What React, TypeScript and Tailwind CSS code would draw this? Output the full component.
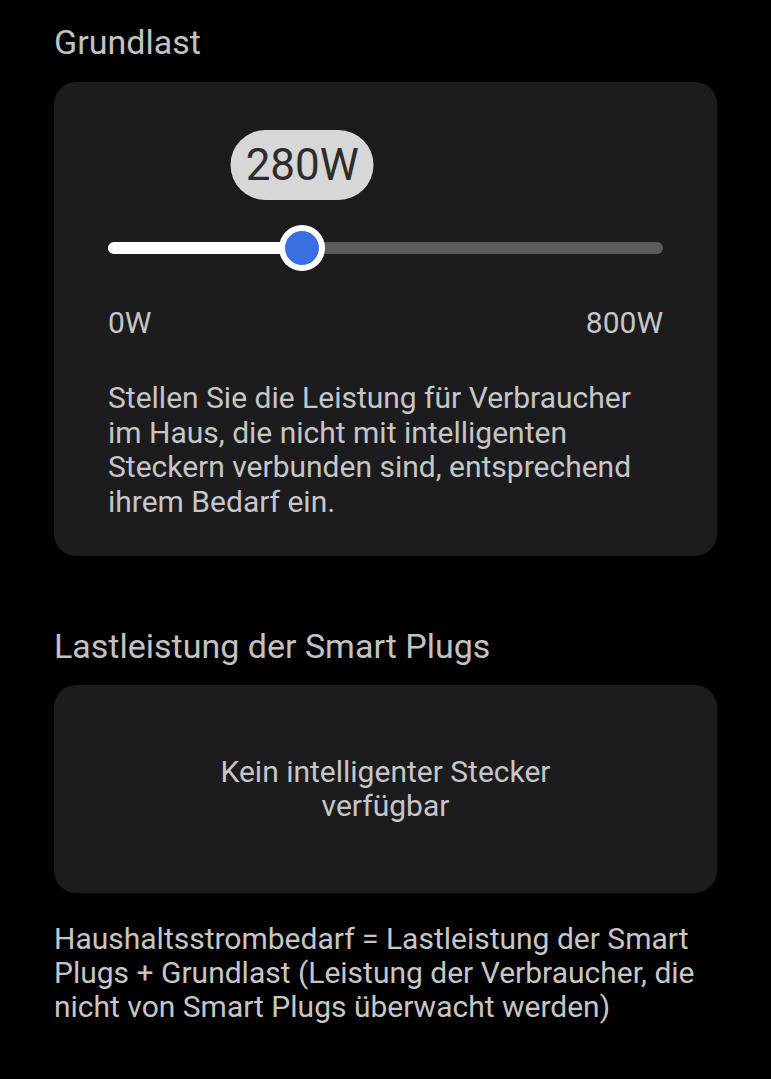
import React from "react";

const value = 280;
const max = 800;

function Slider() {
  const pct = (value / max) * 100;
  return (
    <div className="relative pt-[48px]">
      {/* value bubble over the thumb */}
      <div className="relative h-[70px]">
        <div
          className="absolute top-0 flex h-[70px] w-[143px] -translate-x-1/2 items-center justify-center rounded-full bg-[#d7d7d7] text-[44px] text-[#2c2c2c]"
          style={{ left: `${pct}%` }}
        >
          {value}W
        </div>
      </div>
      <div className="relative mt-[24px] flex h-[48px] items-center">
        <div className="h-[12px] w-full rounded-full bg-[#5b5b5b]" />
        <div
          className="absolute left-0 h-[12px] rounded-full bg-white"
          style={{ width: `${pct}%` }}
        />
        <div
          className="absolute flex h-[46px] w-[46px] -translate-x-1/2 items-center justify-center rounded-full bg-white"
          style={{ left: `${pct}%` }}
        >
          <div className="h-[34px] w-[34px] rounded-full bg-[#3a6fe2]" />
        </div>
      </div>
    </div>
  );
}

export default function App() {
  return (
    <div
      className="min-h-[1079px] bg-black px-[54px] pt-[22px] text-[#c6c6c6]"
      style={{ fontFamily: "Roboto, 'Noto Sans', sans-serif" }}
    >
      <h2 className="text-[34px] leading-[40px] text-[#c2c2c2]">Grundlast</h2>

      <div className="mt-[20px] rounded-[22px] bg-[#1c1c1e] px-[54px] pb-[36px]">
        <Slider />
        <div className="mt-[33px] flex justify-between text-[30px] leading-[36px]">
          <span>0W</span>
          <span>800W</span>
        </div>
        <p className="mt-[40px] text-[30px] leading-[34.7px]">
          Stellen Sie die Leistung für Verbraucher im Haus, die nicht mit
          intelligenten Steckern verbunden sind, entsprechend ihrem Bedarf ein.
        </p>
      </div>

      <h2 className="mt-[70px] text-[34px] leading-[40px] text-[#c2c2c2]">
        Lastleistung der Smart Plugs
      </h2>

      <div className="mt-[19px] flex h-[208px] items-center justify-center rounded-[22px] bg-[#1c1c1e] text-center text-[30px] leading-[34px]">
        <p>
          Kein intelligenter Stecker
          <br />
          verfügbar
        </p>
      </div>

      <p className="mt-[29px] text-[30px] leading-[34px]">
        Haushaltsstrombedarf = Lastleistung der Smart Plugs + Grundlast
        (Leistung der Verbraucher, die nicht von Smart Plugs überwacht werden)
      </p>
    </div>
  );
}
